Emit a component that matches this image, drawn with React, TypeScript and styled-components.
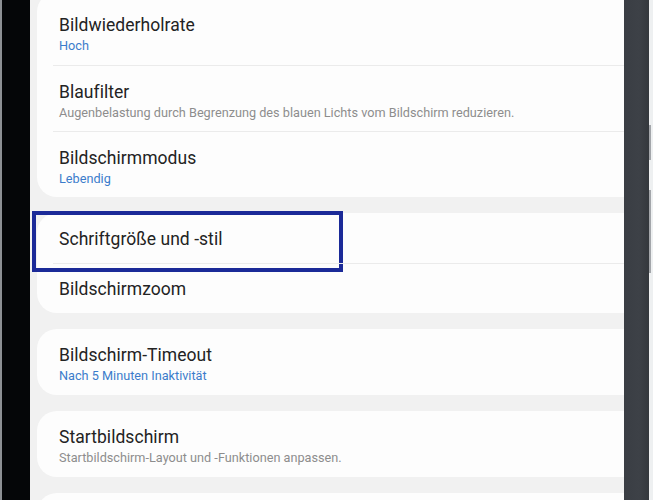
import styled, { createGlobalStyle } from 'styled-components'

const GlobalStyle = createGlobalStyle`
  html, body {
    margin: 0;
    padding: 0;
    height: 500px;
    overflow: hidden;
    background: #ececec;
  }
  body {
    font-family: Roboto, "Noto Sans", "Liberation Sans", sans-serif;
  }
`

const Device = styled.div`
  display: flex;
  width: 653px;
  height: 500px;
`

const LeftBezel = styled.div`
  width: 28px;
  flex: none;
  background: #050608;
  border-left: 2px solid #8d9094;
`

const RightBezel = styled.div`
  width: 25px;
  flex: none;
  background: linear-gradient(90deg, #3a3e44 0%, #3d4147 60%, #34383d 100%);
`

const SideEdge = styled.div`
  width: 4px;
  flex: none;
  display: flex;
  flex-direction: column;
  background: #eef0f1;
`

const SideButton = styled.div<{ $top: number; $height: number }>`
  margin-top: ${(p) => p.$top}px;
  height: ${(p) => p.$height}px;
  width: 2px;
  background: #a3a6aa;
`

const Screen = styled.main`
  flex: 1;
  background: #f1f1f1;
  overflow: hidden;
`

const Stack = styled.div`
  display: flex;
  flex-direction: column;
  gap: 16px;
  margin-top: -8px;
  padding-left: 7px;
  margin-right: -30px;
`

const Card = styled.section<{ $padTop?: number; $minHeight?: number }>`
  background: #fdfdfd;
  border-radius: 20px;
  padding-top: ${(p) => p.$padTop ?? 0}px;
  min-height: ${(p) => p.$minHeight ?? 0}px;
  display: flex;
  flex-direction: column;
`

const Row = styled.div<{ $single?: boolean; $divided?: boolean }>`
  position: relative;
  height: ${(p) => (p.$single ? 50 : 66)}px;
  box-sizing: border-box;
  padding: ${(p) => (p.$single ? '1px 22px 0' : '15px 22px 0')};
  display: flex;
  flex-direction: column;
  justify-content: ${(p) => (p.$single ? 'center' : 'flex-start')};
  border-top: ${(p) => (p.$divided ? '1px solid #ebebeb' : 'none')};
  margin-left: ${(p) => (p.$divided ? '16px' : '0')};
  padding-left: ${(p) => (p.$divided ? '6px' : '22px')};
`

const Title = styled.div`
  font-size: 17.5px;
  line-height: 22px;
  color: #232323;
  letter-spacing: 0.05px;
`

const Sub = styled.div<{ $accent?: boolean }>`
  margin-top: 1px;
  font-size: 12.7px;
  line-height: 17px;
  color: ${(p) => (p.$accent ? '#3b7ccb' : '#8d8d8d')};
`

const Highlight = styled.div<{ $inset: number }>`
  position: absolute;
  left: ${(p) => -5 - p.$inset}px;
  top: -2px;
  width: 311px;
  height: 61px;
  box-sizing: border-box;
  border: 4px solid #1b2a98;
  pointer-events: none;
`

type Item = { title: string; sub?: string; accent?: boolean }

const Group = ({ items, single, padTop, marked }: { items: Item[]; single?: boolean; padTop?: number; marked?: number }) => (
  <Card $padTop={padTop}>
    {items.map((it, i) => (
      <Row key={it.title} $single={single} $divided={i > 0}>
        <Title>{it.title}</Title>
        {it.sub && <Sub $accent={it.accent}>{it.sub}</Sub>}
        {marked === i && <Highlight $inset={i > 0 ? 16 : 0} />}
      </Row>
    ))}
  </Card>
)

export default function App() {
  return (
    <>
      <GlobalStyle />
      <Device>
        <LeftBezel />
        <Screen>
          <Stack>
            <Group
              padTop={7}
              items={[
                { title: 'Bildwiederholrate', sub: 'Hoch', accent: true },
                { title: 'Blaufilter', sub: 'Augenbelastung durch Begrenzung des blauen Lichts vom Bildschirm reduzieren.' },
                { title: 'Bildschirmmodus', sub: 'Lebendig', accent: true },
              ]}
            />
            <Group single marked={0} items={[{ title: 'Schriftgröße und -stil' }, { title: 'Bildschirmzoom' }]} />
            <Group items={[{ title: 'Bildschirm-Timeout', sub: 'Nach 5 Minuten Inaktivität', accent: true }]} />
            <Group items={[{ title: 'Startbildschirm', sub: 'Startbildschirm-Layout und -Funktionen anpassen.' }]} />
            <Card $minHeight={66} />
          </Stack>
        </Screen>
        <RightBezel />
        <SideEdge>
          <SideButton $top={125} $height={35} />
          <SideButton $top={30} $height={83} />
        </SideEdge>
      </Device>
    </>
  )
}
